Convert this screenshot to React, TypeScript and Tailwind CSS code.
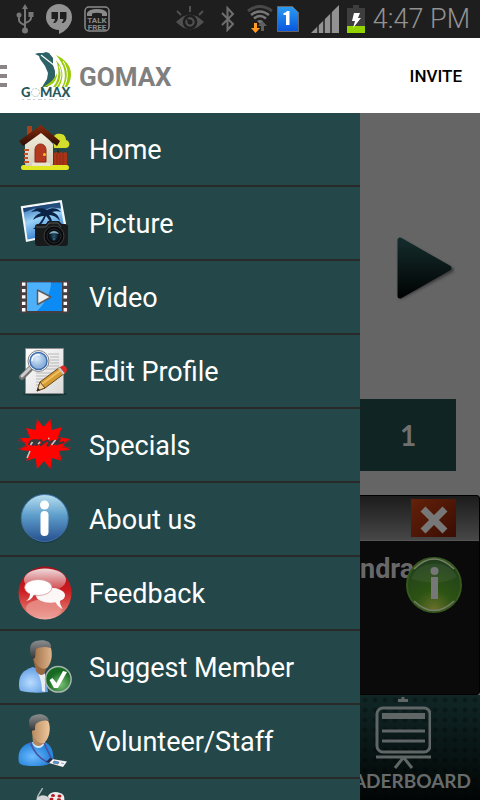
import React from "react";

const Home = () => (
  <>
    <defs>
      <linearGradient id="roof" x1="0" y1="0" x2="0" y2="1"><stop offset="0" stopColor="#8a2c0c" /><stop offset="1" stopColor="#2c0d06" /></linearGradient>
      <linearGradient id="wall" x1="0" y1="0" x2="0" y2="1"><stop offset="0" stopColor="#f3efdf" /><stop offset="1" stopColor="#d5cdb8" /></linearGradient>
    </defs>
    <path d="M40 26l2 10h-4z" fill="#3c1a0c" />
    <path d="M35 17c0-4 4-6 8-5 3 0 5 3 5 6 4 1 5 7 0 8H36z" fill="#d3dd2b" />
    <path d="M36 31l3-1 2 1 2-1 2 1 2-1 2 1v13H36z" fill="#a93417" />
    <path d="M39 31v12M42 31v12M45 31v12" stroke="#7c2a17" strokeWidth=".6" />
    <rect x="3" y="43" width="48" height="5" rx="2.500" fill="#e0e61f" />
    <path d="M9 4h5v12H9z" fill="#a8401c" />
    <path d="M7 22L22 8l13 14v20l-1 2H8l-1-2z" fill="url(#wall)" />
    <path d="M6 28h5M6 32h4M6 36h4M6 40h5" stroke="#c2512c" strokeWidth="2" />
    <path d="M1 19L22.700 3 42 19l-3 5L23 11 5 24z" fill="url(#roof)" />
    <path d="M17 40V28c0-8 11-8 11 0v12z" fill="#b3391f" stroke="#8c2c17" />
    <circle cx="26.500" cy="32.500" r="1.500" fill="#ffc61c" />
    <path d="M14 41h18v3H14z" fill="#e9e2cd" />
  </>
);

const Picture = () => (
  <>
    <defs>
      <linearGradient id="sky" x1="0" y1="0" x2=".4" y2="1"><stop offset="0" stopColor="#1657a5" /><stop offset=".5" stopColor="#9bd2f7" /><stop offset="1" stopColor="#2c7bd0" /></linearGradient>
      <radialGradient id="lens"><stop offset="0" stopColor="#2b5976" /><stop offset=".6" stopColor="#0b161f" /><stop offset="1" stopColor="#050505" /></radialGradient>
    </defs>
    <path d="M2.700 10.300L43.700 4l6 33L8 46z" fill="#f6f8fa" />
    <path d="M5 12.300L42 6.500 47 36 9.500 43.500z" fill="url(#sky)" />
    <path d="M5 12.300L42 6.500l1 6-10-1-8 3-9-2-10 4z" fill="#0d2f5c" opacity=".75" />
    <path d="M29 14c-5-3-12-2-16 2 5-1 8-1 10 1-4 1-7 4-8 7 4-3 8-4 11-4-2 5-6 9-11 13h3c5-4 8-8 10-13 3 3 5 7 5 12h2c0-5-1-9-4-13 4 0 8 2 11 6-1-5-4-8-8-9 3-1 6-1 9 0-3-4-9-5-14-2z" fill="#0b2446" />
    <path d="M17 31c0-2 1-3 3-3h8l2-3h11l3 3h3c2 0 3 1 3 3v16c0 2-1 3-3 3H20c-2 0-3-1-3-3z" fill="#191a1c" />
    <path d="M18 31h10l3-4h9l3 4" stroke="#55585d" fill="none" />
    <circle cx="36" cy="40" r="10" fill="#0a0a0b" stroke="#3b3d40" />
    <circle cx="36" cy="40" r="7" fill="url(#lens)" stroke="#26292c" />
    <path d="M31 38c2-4 8-4 10 0-3-1-7-1-10 0z" fill="#7eabc0" />
    <circle cx="36" cy="43" r="1.500" fill="#31607d" />
  </>
);

const Video = () => (
  <>
    <rect x="2" y="11" width="49" height="32" rx="1" fill="#453f42" />
    <rect x="9" y="12.500" width="35" height="28.500" fill="#0b8cf5" />
    <path d="M9 12.500h24c0 10-6 21-14 28.500H9z" fill="#4cb0fb" />
    <path d="M5.700 12.500v29M47.300 12.500v29" stroke="#fff" strokeWidth="3.500" strokeDasharray="3.300 3.100" />
    <path d="M19.500 20v14.500L33 27z" fill="#f1f1f1" stroke="#5c5c60" strokeWidth="1.500" strokeLinejoin="round" />
  </>
);

const EditProfile = () => (
  <>
    <defs>
      <linearGradient id="paper" x1="0" y1="0" x2="1" y2="1"><stop offset="0" stopColor="#fff" /><stop offset="1" stopColor="#d9d9d9" /></linearGradient>
      <radialGradient id="glass" cx=".4" cy=".35"><stop offset="0" stopColor="#dcecfb" /><stop offset="1" stopColor="#8fb3dc" /></radialGradient>
    </defs>
    <ellipse cx="27" cy="50" rx="22" ry="2" fill="#132b2b" opacity=".7" />
    <path d="M7.500 4.500h38v45h-38z" fill="url(#paper)" stroke="#8c8c8c" />
    <path d="M30 10h11M32 13h9M32 16h9M32 19h9M30 22h11M28 25h13M18 29h22M18 32h20M18 35h18M18 38h14M18 41h10" stroke="#b8b8b8" />
    <path d="M12 25l-8 8" stroke="#707070" strokeWidth="6" strokeLinecap="round" />
    <path d="M12 24l-8 8" stroke="#cdcdcd" strokeWidth="3" strokeLinecap="round" />
    <circle cx="20.500" cy="17" r="10.500" fill="#fff" stroke="#828282" />
    <circle cx="20.500" cy="17" r="8.500" fill="url(#glass)" stroke="#3d6cad" strokeWidth="1.500" />
    <path d="M14 17c0-5 4-7 8-6" stroke="#f4faff" strokeWidth="1.500" fill="none" />
    <path d="M19 47l3-9 20-15 5 6-20 15z" fill="#d59b33" stroke="#6e4817" />
    <path d="M24 40l19-14" stroke="#f0c060" strokeWidth="2" />
    <path d="M19 47l3-9 5 6z" fill="#ecd6a5" stroke="#6e4817" /><path d="M19 47l1-3 2 2z" fill="#222" />
    <path d="M40 24.500l2-1.500 5 6-2 1.500z" fill="#c9ccd0" />
    <path d="M43 22.500c3-3 8 2 5 6l-1 1-5-6z" fill="#dd2a23" />
  </>
);

const Specials = () => (
  <>
    <path d="M19 1L25.500 9 32.500 1 34 12 44 9 40 19 52 21 45 27 52 32 41 33 44 43 34 40 32.500 51 26 43 19 51 17.500 40 8 43 12 33 2 32 8 27 2 20 12 20 8 10 17.500 12z" fill="#fe0300" />
    <path d="M0 22l8 3M0 31l9-3M45 25l8-3M44 29l9 1M19 1l1 5M32.500 1l-1 5M8 43l4-4M44 43l-4-4" stroke="#8a2828" fill="none" />
    <path d="M11 27c1-5 6-6 6-3s-4 4-3 1 5-4 6-1-4 4-2 1 5-4 6-1-3 4 0 2 5-5 7-2-4 5 0 2 2-3 4-3-1 5 2 2l5-5-3 6 7-2" stroke="#37383a" strokeWidth="2.200" fill="none" />
    <path d="M12.500 27l2-3M20 26l2-2M33.500 27l4-5M9 40l3-7M30 20.500h1.500" stroke="#cfcaca" strokeWidth="1.500" />
  </>
);

const About = () => (
  <>
    <defs>
      <linearGradient id="blueBall" x1="0" y1="0" x2="0" y2="1"><stop offset="0" stopColor="#b9e0f0" /><stop offset=".45" stopColor="#5d9dcb" /><stop offset="1" stopColor="#27508f" /></linearGradient>
    </defs>
    <ellipse cx="27" cy="31" rx="21" ry="20" fill="#102c38" opacity=".6" />
    <circle cx="26.700" cy="26" r="23.500" fill="url(#blueBall)" stroke="#4073a8" />
    <circle cx="26.500" cy="13" r="4.500" fill="#fff" />
    <rect x="22.500" y="19" width="8" height="25" rx="4" fill="#fff" />
  </>
);

const Feedback = () => (
  <>
    <defs>
      <linearGradient id="redBall" x1="0" y1="0" x2="0" y2="1"><stop offset="0" stopColor="#a40d16" /><stop offset=".45" stopColor="#cc1c20" /><stop offset=".8" stopColor="#e0665f" /><stop offset="1" stopColor="#f2b0a8" /></linearGradient>
      <linearGradient id="redGloss" x1="0" y1="0" x2="0" y2="1"><stop offset="0" stopColor="#fff" stopOpacity=".85" /><stop offset="1" stopColor="#fff" stopOpacity=".15" /></linearGradient>
    </defs>
    <circle cx="27" cy="27" r="26.500" fill="url(#redBall)" />
    <ellipse cx="27" cy="14" rx="21" ry="11.500" fill="url(#redGloss)" />
    <ellipse cx="26" cy="42" rx="18" ry="9" fill="#e99b94" opacity=".7" />
    <ellipse cx="32.500" cy="29.300" rx="14.500" ry="7.500" fill="#fcf7f7" />
    <path d="M37 34c1 4 3 7 8 9-3-3-3-6-3-9z" fill="#fcf7f7" />
    <ellipse cx="20.300" cy="21.500" rx="13.700" ry="8" fill="#fff" stroke="#c88" strokeWidth=".7" />
    <path d="M12 27c0 4-1 6-4 8 5-1 7-4 8-7z" fill="#fff" />
  </>
);

const PersonGradients = () => (
  <defs>
    <linearGradient id="skin" x1="0" y1="0" x2="1" y2="0"><stop offset="0" stopColor="#9c6b42" /><stop offset="1" stopColor="#ddb48c" /></linearGradient>
    <linearGradient id="fairSkin" x1="0" y1="0" x2="1" y2="0"><stop offset="0" stopColor="#b78c5f" /><stop offset="1" stopColor="#f0c79c" /></linearGradient>
    <radialGradient id="jacket" cx=".4" cy=".6"><stop offset="0" stopColor="#b9dcff" /><stop offset="1" stopColor="#6fa8e8" /></radialGradient>
    <radialGradient id="scrubs" cx=".4" cy=".6"><stop offset="0" stopColor="#6dbcff" /><stop offset="1" stopColor="#2a86dc" /></radialGradient>
    <radialGradient id="greenDisc" cx=".6" cy=".7"><stop offset="0" stopColor="#79c276" /><stop offset="1" stopColor="#176a22" /></radialGradient>
    <linearGradient id="hair" x1="0" y1="0" x2="0" y2="1"><stop offset="0" stopColor="#8b8e90" /><stop offset="1" stopColor="#353535" /></linearGradient>
  </defs>
);

const SuggestMember = () => (
  <>
    <PersonGradients />
    <path d="M1 44c0-9 4-14 14-17l12 6 3 19c-9 1-18 1-27-1-2-1-2-4-2-7z" fill="url(#jacket)" />
    <path d="M17 28c4 4 8 6 10 6v18l-3-1c0-10-3-17-7-23z" fill="#e9edf2" />
    <path d="M15 18l3 13c3 5 8 5 9 1l2-6z" fill="#996842" />
    <path d="M14 9c6-5 17-6 19-1 2 8 0 16-4 20-6 3-12-3-14-11z" fill="url(#skin)" />
    <path d="M14 19c-3-9-3-16 4-18 8-2 16 0 15 7-6-2-12-1-15 1l-1 9z" fill="url(#hair)" />
    <circle cx="40.300" cy="39.300" r="12.800" fill="url(#greenDisc)" stroke="#a7b5ad" strokeWidth="1.500" />
    <path d="M31.500 40l3-2 4 5 6.500-12 4 1-9 16h-4z" fill="#fff" />
  </>
);

const Volunteer = () => (
  <>
    <path d="M.5 44c0-9 5-14 14-16h12c7 3 9 9 9 18-3 4-8 6-17 6-6 0-13 0-16-2-2-1-2-3-2-6z" fill="url(#scrubs)" />
    <path d="M14 28c2 8 11 8 13 0z" fill="#cde8fb" />
    <path d="M14 17l1 12c3 4 9 4 11-1l1-8z" fill="#b2875d" />
    <path d="M15 9c5-5 15-5 16 0 2 7 0 16-5 20-6 1-11-4-12-12z" fill="url(#fairSkin)" />
    <path d="M13 17C10 8 10 3 17 1c6-2 13 0 14 6-5-1-9 0-12 2-2 1-2 4-2 7z" fill="url(#hair)" />
    <path d="M12 28c3 8 9 16 17 20M26 29l8 17" stroke="#4b4e9c" strokeWidth="1.500" fill="none" />
    <path d="M34 45l15 2.500-4 5.500-14-4z" fill="#f4f4f8" />
    <path d="M36 47l5 1-1 2-5-1zM43 49l3 .5" fill="#5195d8" stroke="#456" strokeWidth=".5" />
    <path d="M28 48l4-4 3 1-4 4z" fill="#282c48" />
  </>
);

const Games = () => (
  <>
    <path d="M24.500 0c-1 4-7 7-5 14" stroke="#aab3b4" strokeWidth="1.500" fill="none" />
    <path d="M30 8c2-4 8-5 12-3 4 1 5 4 4 9v2H32z" fill="#efeded" />
    <path d="M19 10c4-4 8-3 11-1l6 7H18z" fill="#d3d5d6" />
    <ellipse cx="35" cy="7.500" rx="2" ry="1.500" fill="#b51c22" /><ellipse cx="41.500" cy="8" rx="2" ry="1.500" fill="#b51c22" />
    <ellipse cx="33.500" cy="11" rx="2" ry="1.300" fill="#b51c22" /><ellipse cx="41" cy="11.500" rx="2" ry="1.300" fill="#b51c22" />
  </>
);

const items: { label: string; art: () => React.ReactElement }[] = [
  { label: "Home", art: Home },
  { label: "Picture", art: Picture },
  { label: "Video", art: Video },
  { label: "Edit Profile", art: EditProfile },
  { label: "Specials", art: Specials },
  { label: "About us", art: About },
  { label: "Feedback", art: Feedback },
  { label: "Suggest Member", art: SuggestMember },
  { label: "Volunteer/Staff", art: Volunteer },
  { label: "", art: Games },
];

function StatusBar() {
  return (
    <div className="flex h-[38px] shrink-0 items-center justify-between bg-[#1e1e1e] pr-[10px] pl-4 text-[#929292]">
      <div className="flex items-center gap-3">
        <svg width="18" height="30" viewBox="0 0 18 30" fill="none" stroke="#777" strokeWidth="2">
          <path d="M9 4v22M3 12v4q0 3 6 5M15 11v3q0 3-6 5" />
          <path d="M6 5l3-5 3 5z" fill="#777" stroke="none" />
          <circle cx="3" cy="11" r="2.500" fill="#777" stroke="none" />
          <path d="M12.500 8h5v5h-5z" fill="#777" stroke="none" />
          <circle cx="9" cy="26.500" r="3" fill="#777" stroke="none" />
        </svg>
        <svg width="26" height="30" viewBox="0 0 26 30">
          <circle cx="13" cy="13" r="13" fill="#929292" />
          <path d="M13 24v6c7-3 11-8 12.500-14z" fill="#929292" />
          <path d="M5.500 8h6.500v6q0 3-3 5H7q2-2 2-4H5.500zM14 8h6.500v6q0 3-3 5h-2q2-2 2-4H14z" fill="#1e1e1e" />
        </svg>
        <svg width="26" height="26" viewBox="0 0 26 26">
          <rect x="1" y="1" width="24" height="24" rx="4" fill="none" stroke="#8a8a8a" strokeWidth="1.500" />
          <path d="M3 10V7q2-4 10-4t10 4v3h-5V7.500Q13 6 8 7.500V10z" fill="#8a8a8a" />
          <text x="13" y="17" textAnchor="middle" fontSize="8" fontWeight="bold" fontFamily="Roboto, sans-serif" fill="#8a8a8a">TALK</text>
          <text x="13" y="24" textAnchor="middle" fontSize="8" fontWeight="bold" fontFamily="Roboto, sans-serif" fill="#8a8a8a">FREE</text>
        </svg>
      </div>
      <div className="flex items-center gap-2">
        <svg width="30" height="26" viewBox="0 0 30 26" className="mr-1" fill="none" stroke="#505050" strokeWidth="2">
          <path d="M1.500 16Q15 2 28.500 16 15 30 1.500 16z" fill="#505050" strokeWidth="1" />
          <circle cx="15" cy="16" r="6" stroke="#1e1e1e" strokeWidth="2.500" /><circle cx="15" cy="16" r="2.500" fill="#1e1e1e" stroke="none" />
          <path d="M15 16l-3-3" stroke="#1e1e1e" /><path d="M15 0v6M2 5l4 4M28 5l-4 4" />
        </svg>
        <svg width="14" height="26" viewBox="0 0 14 26" className="mx-1" fill="none" stroke="#6e6e6e" strokeWidth="2">
          <path d="M1 7l11 11-5.500 6V2L12 8 1 19" />
        </svg>
        <div className="flex items-center gap-1">
          <svg width="26" height="28" viewBox="0 0 26 28" fill="none">
            <path d="M1 6q12-9 24 0" stroke="#484848" strokeWidth="3" />
            <path d="M4 10q9-7 18 0M7 13.500q6-5 12 0" stroke="#777" strokeWidth="2.500" /><path d="M10 16q3-2 6 0l-3 3z" fill="#777" />
            <path d="M7 18h3v5h3l-4.500 5L4 23h3z" fill="#ff9d23" /><path d="M14 26h3v-5h3l-4.500-5-4.500 5h3z" fill="#606060" />
          </svg>
          <svg width="22" height="26" viewBox="0 0 22 26">
            <defs><linearGradient id="sim" x1="0" y1="0" x2="0" y2="1"><stop offset="0" stopColor="#2b9cf0" /><stop offset="1" stopColor="#0955dc" /></linearGradient></defs>
            <path d="M.5.500h15l6 6v19H.5z" fill="url(#sim)" stroke="#666" />
            <path d="M9 19V9H6.500V7Q9 7 10 5h2.500v14z" fill="#fff" />
          </svg>
        </div>
        <svg width="28" height="28" viewBox="0 0 28 28" className="ml-1">
          <path d="M0 28L28 0v28z" fill="#929292" /><path d="M7 20v8M13 14v14M20 6v22" stroke="#1e1e1e" strokeWidth="1.500" />
        </svg>
        <svg width="18" height="28" viewBox="0 0 18 28">
          <path d="M6 0h6v3h6v25H0V3h6z" fill="#3e3e3e" /><path d="M0 21h18v7H0z" fill="#93d300" />
          <path d="M7 8h6l-2 5h3l-8 10 2-7H5z" fill="#fff" />
        </svg>
        <span className="text-[27px] leading-[38px] font-light whitespace-nowrap">4:47 PM</span>
      </div>
    </div>
  );
}

function Header() {
  return (
    <header className="flex h-[75px] shrink-0 items-center bg-white pr-[18px]">
      <button aria-label="Toggle menu" className="flex w-[7px] flex-col gap-[5px]">
        <span className="h-1 bg-[#8b8489]" />
        <span className="h-1 bg-[#8b8489]" />
        <span className="h-1 bg-[#8b8489]" />
      </button>
      <svg width="50" height="50" viewBox="0 0 50 50" className="ml-[14px]" role="img" aria-label="Gomax logo">
        <path d="M17 2l5 0 3-1 3 1 4 5 0 7 2 6 0 6-3 6-5 4h-5l5-8 1-6-3-7-5-7-1-3-4-2z" fill="#2d6366" />
        <path d="M20 4l14 11" stroke="#fff" strokeWidth="1.200" />
        <path d="M35 4c9 4 15 11 15 19 0 6-2 10-4 13h-5c5-9 4-21-6-32z" fill="#9aca0a" />
        <path d="M35 9c8 9 8 18 3 27h-6c6-7 7-16 3-27z" fill="#9aca0a" />
        <path d="M36 22c0 9-5 13-14 14 6-3 11-7 14-14z" fill="#9aca0a" />
        <path d="M42 10c6 10 5 18 1 26M38 15c4 9 1 16-3 21" stroke="#fff" fill="none" />
        <text x="0" y="46" fontSize="13" fontWeight="900" fontFamily="Lato, sans-serif" fill="#25595d">G</text>
        <circle cx="14.500" cy="41.500" r="4" fill="none" stroke="#a9bcbd" strokeDasharray="2 1" />
        <text x="19" y="46" fontSize="13" fontWeight="900" fontFamily="Lato, sans-serif" fill="#25595d">MAX</text>
        <path d="M1 48.500h48" stroke="#c5cfcf" strokeDasharray="2 3 4 2" />
      </svg>
      <h1 className="ml-2 pt-[2px] text-[26px] leading-8 font-bold text-[#808080]">GOMAX</h1>
      <button className="ml-auto pt-[2px] text-[17px] font-medium text-black">INVITE</button>
    </header>
  );
}

function Drawer() {
  return (
    <nav className="w-3/4 shrink-0 overflow-hidden bg-[#244849]">
      {items.map(({ label, art: Art }, i) => (
        <a key={i} href="#" aria-label={label || "Games"} className="flex h-[74px] items-center gap-[17px] border-b-2 border-[#292929] pl-[18px] text-[27px] text-white">
          <svg width="54" height="54" viewBox="0 0 54 54" className="shrink-0" aria-hidden="true"><Art /></svg>
          <span className="pt-[2px] whitespace-nowrap">{label}</span>
        </a>
      ))}
    </nav>
  );
}

function DimmedPage() {
  return (
    <main className="flex min-w-0 flex-1 flex-col overflow-hidden bg-[#656565]">
      <div className="flex h-[286px] shrink-0 items-center justify-center pt-[26px] pl-[10px]">
        <button aria-label="Next">
          <svg width="60" height="66" viewBox="0 0 60 66">
            <defs>
              <linearGradient id="arrow" x1="0" y1="0" x2="0" y2="1"><stop offset="0" stopColor="#142b2b" /><stop offset="1" stopColor="#010303" /></linearGradient>
              <filter id="arrowShadow"><feGaussianBlur stdDeviation="1.500" /></filter>
            </defs>
            <path d="M6 6v55L57 34z" fill="#383838" stroke="#383838" strokeWidth="4" strokeLinejoin="round" filter="url(#arrowShadow)" />
            <path d="M5 4v56L54 32z" fill="url(#arrow)" stroke="url(#arrow)" strokeWidth="5" strokeLinejoin="round" />
          </svg>
        </button>
      </div>
      <div className="mr-6 flex h-[72px] shrink-0 items-center justify-center bg-[#102423] font-[Lato] text-[28px] font-bold text-[#707070]">1</div>
      <section className="mt-6 h-[200px] shrink-0 overflow-hidden rounded-r border border-l-0 border-black bg-[#0a0a0a]">
        <div className="flex h-[45px] items-center justify-end border-b border-[#555] bg-linear-to-b from-[#1c1c1c] to-[#474747] pr-[23px]">
          <button aria-label="Close" className="flex h-[38px] w-[45px] items-center justify-center bg-linear-to-br from-[#64210a] to-[#3a0d03] pt-1">
            <svg width="30" height="28" viewBox="0 0 30 28"><path d="M4 3l22 22M26 3L4 25" stroke="#777" strokeWidth="7" /></svg>
          </button>
        </div>
        <div className="relative pt-3 text-[27px] leading-8 font-bold text-[#686868]">
          ndra
          <button aria-label="Details" className="absolute top-4 right-[17px]">
            <svg width="56" height="56" viewBox="0 0 56 56" className="block">
              <defs>
                <radialGradient id="greenBall" cx=".5" cy=".95" r=".9"><stop offset="0" stopColor="#68702a" /><stop offset=".4" stopColor="#2d5313" /><stop offset="1" stopColor="#213f1c" /></radialGradient>
              </defs>
              <circle cx="28" cy="28" r="27" fill="url(#greenBall)" stroke="#35591d" strokeWidth="2" />
              <path d="M8 12Q28-8 48 12M8 44q20 19 40 0" stroke="#777c6b" strokeWidth="1.500" fill="none" />
              <path d="M5 22a24 20 0 0146-2Q34 30 5 22z" fill="#fff" opacity=".06" />
              <circle cx="28.500" cy="14" r="4" fill="#777" /><path d="M25 20h7v22h-7z" fill="#777" />
            </svg>
          </button>
        </div>
      </section>
      <button className="flex min-h-[105px] flex-1 flex-col bg-[radial-gradient(circle,#00000040_2px,transparent_3px),linear-gradient(#102726,#020505)] bg-size-[10px_10px,100%_100%] pr-[9px]">
        <svg width="56" height="74" viewBox="0 0 56 74" className="ml-[15px] shrink-0" fill="none" stroke="#606565" strokeWidth="3">
          <path d="M23 5.500h10M28 2v5" />
          <rect x="2" y="13" width="53" height="44" rx="6" />
          <path d="M7 21h43" strokeWidth="6" /><path d="M7 36h43M7 46h43M1 62h55M28 63l-8 10M29 63l8 10" />
        </svg>
        <span className="flex w-full justify-end font-[Lato] text-[19px] leading-6 font-bold text-[#676b6b]">LEADERBOARD</span>
      </button>
    </main>
  );
}

export default function App() {
  return (
    <div className="flex h-screen flex-col overflow-hidden bg-[#656565] font-[Roboto,sans-serif]">
      <StatusBar />
      <Header />
      <div className="flex min-h-0 flex-1">
        <Drawer />
        <DimmedPage />
      </div>
    </div>
  );
}
